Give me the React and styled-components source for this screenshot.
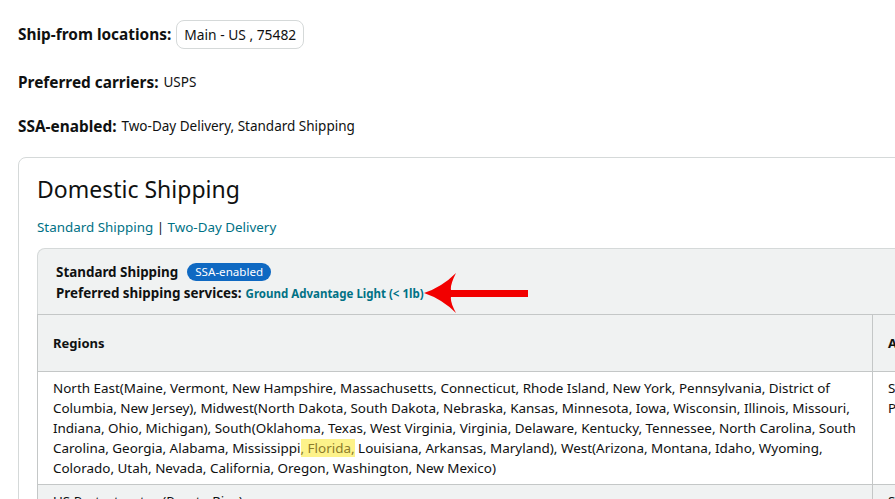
import React from 'react';
import styled, { createGlobalStyle } from 'styled-components';

const Global = createGlobalStyle`
  body {
    margin: 0;
    overflow: hidden;
    background: #fff;
    color: #0f1111;
    font-family: "Noto Sans", "Liberation Sans", sans-serif;
    font-size: 13.5px;
  }
`;

const Page = styled.div`
  padding: 20px 0 0 18px;
  width: 1200px;
`;

const InfoRow = styled.div`
  display: flex;
  align-items: center;
  height: ${(p) => p.$h || 20}px;
  margin-bottom: ${(p) => p.$mb || 0}px;
`;

const Label = styled.span`
  font-weight: 700;
  font-size: 15.4px;
  margin-right: 5px;
`;

const Pill = styled.span`
  display: inline-flex;
  align-items: center;
  height: 27px;
  padding: 0 7px;
  font-size: 13.8px;
  border: 1px solid #d5d9d9;
  border-radius: 8px;
`;

const Card = styled.section`
  width: 1100px;
  border: 1px solid #d5d9d9;
  border-radius: 8px;
  padding: 15px 18px 0;
`;

const Heading = styled.h2`
  margin: 0;
  font-size: 23px;
  font-weight: 400;
  line-height: 32px;
`;

const Tabs = styled.div`
  margin-top: 12px;
  line-height: 20px;
  font-size: 13.4px;
  a {
    color: #007185;
    text-decoration: none;
  }
`;

const Panel = styled.div`
  position: relative;
  margin-top: 11px;
  background: #f0f2f2;
  border: 1px solid #d5d9d9;
  border-bottom: none;
  border-radius: 8px 8px 0 0;
  padding: 12px 18px 11px;
`;

const PanelLine = styled.div`
  display: flex;
  align-items: center;
  height: ${(p) => p.$h}px;
  font-weight: 700;
  font-size: 13.4px;
`;

const Badge = styled.span`
  margin-left: 9px;
  background: #0f69c2;
  color: #fff;
  font-weight: 400;
  font-size: 11.6px;
  line-height: 18px;
  padding: 0 8px;
  border-radius: 9px;
`;

const ServiceLink = styled.span`
  margin-left: 4px;
  color: #007185;
  font-size: 11.5px;
`;

const Arrow = styled.svg`
  position: absolute;
  left: 384px;
  top: 24px;
`;

const Table = styled.table`
  border-collapse: collapse;
  width: 100%;
  td,
  th {
    border: 1px solid #c4c7c7;
    text-align: left;
    vertical-align: top;
    line-height: 20px;
  }
  th {
    background: #f0f2f2;
    padding: 18px 15px;
    font-weight: 700;
    font-size: 13px;
  }
  td {
    padding: 6px 15px;
    font-size: 13.45px;
  }
  tr.alt td {
    background: #f0f2f2;
  }
`;

const Mark = styled.span`
  background: #fdf28a;
  color: #8c7a2a;
`;

export default function App() {
  return (
    <>
      <Global />
      <Page>
        <InfoRow $h={29} $mb={23}>
          <Label>Ship-from locations:</Label>
          <Pill>Main - US , 75482</Pill>
        </InfoRow>
        <InfoRow $mb={24}>
          <Label>Preferred carriers:</Label>USPS
        </InfoRow>
        <InfoRow $mb={21}>
          <Label>SSA-enabled:</Label>Two-Day Delivery, Standard Shipping
        </InfoRow>
        <Card>
          <Heading>Domestic Shipping</Heading>
          <Tabs>
            <a href="#standard">Standard Shipping</a> | <a href="#twoday">Two-Day Delivery</a>
          </Tabs>
          <Panel>
            <PanelLine $h={22}>
              Standard Shipping<Badge>SSA-enabled</Badge>
            </PanelLine>
            <PanelLine $h={20}>
              Preferred shipping services:<ServiceLink>Ground Advantage Light (&lt; 1lb)</ServiceLink>
            </PanelLine>
            <Arrow width="108" height="44" viewBox="0 0 108 44">
              <path
                d="M2 20 Q20 14 34 0 Q28 12 29 17 L106 17 L106 24 L29 24 Q28 29 34 40 Q20 26 2 20 Z"
                fill="#f20000"
              />
            </Arrow>
          </Panel>
          <Table>
            <colgroup>
              <col style={{ width: '835px' }} />
              <col />
            </colgroup>
            <thead>
              <tr>
                <th>Regions</th>
                <th>Address type</th>
              </tr>
            </thead>
            <tbody>
              <tr>
                <td>
                  North East(Maine, Vermont, New Hampshire, Massachusetts, Connecticut, Rhode Island, New York,
                  Pennsylvania, District of Columbia, New Jersey), Midwest(North Dakota, South Dakota, Nebraska,
                  Kansas, Minnesota, Iowa, Wisconsin, Illinois, Missouri, Indiana, Ohio, Michigan), South(Oklahoma,
                  Texas, West Virginia, Virginia, Delaware, Kentucky, Tennessee, North Carolina, South Carolina,
                  Georgia, Alabama, Mississippi<Mark>, Florida,</Mark> Louisiana, Arkansas, Maryland), West(Arizona,
                  Montana, Idaho, Wyoming, Colorado, Utah, Nevada, California, Oregon, Washington, New Mexico)
                </td>
                <td>
                  Street
                  <br />
                  PO Box
                </td>
              </tr>
              <tr className="alt">
                <td>US Protectorates (Puerto Rico)</td>
                <td>Street</td>
              </tr>
            </tbody>
          </Table>
        </Card>
      </Page>
    </>
  );
}
